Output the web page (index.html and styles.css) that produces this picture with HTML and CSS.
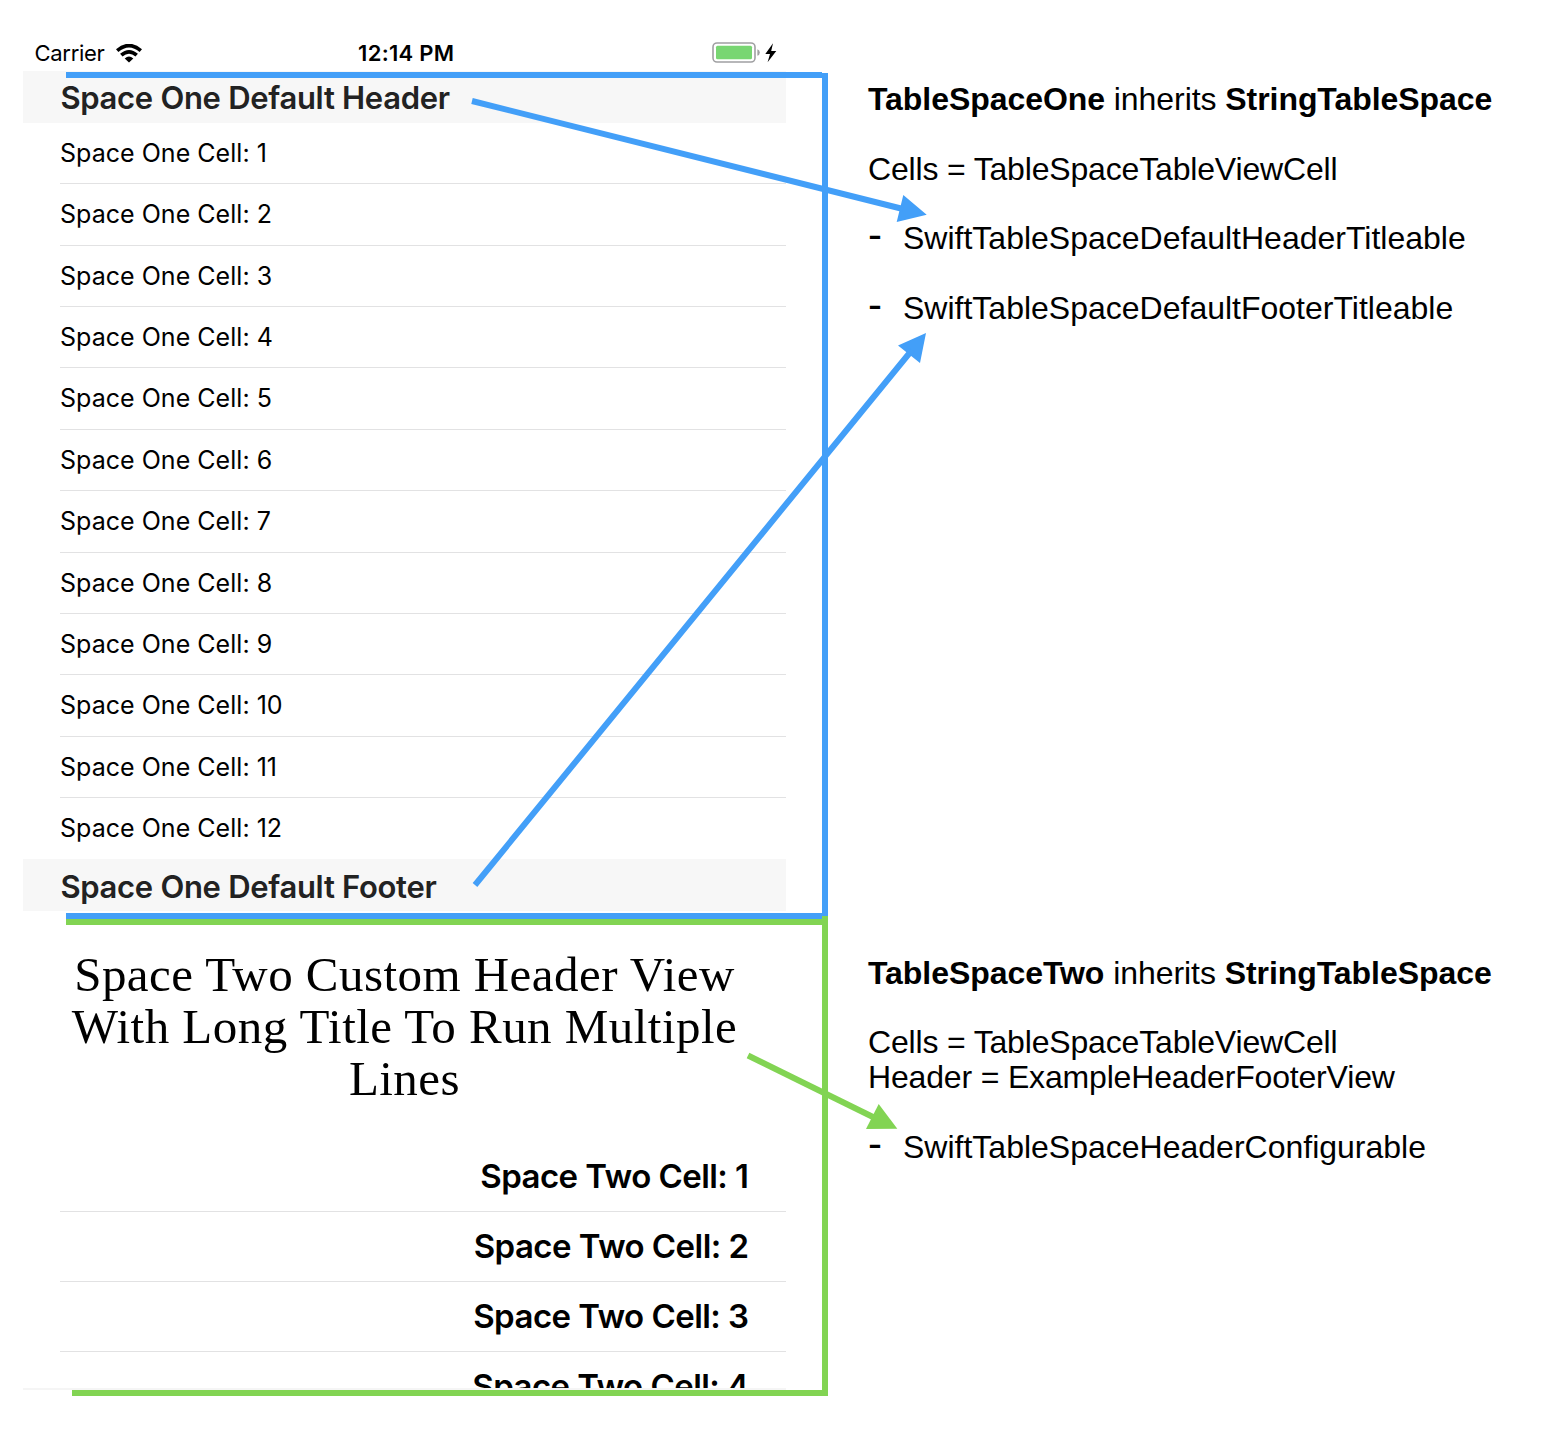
FILE: index.html
```html
<!DOCTYPE html>
<html lang="en">
<head>
<meta charset="utf-8">
<title>Swift Table Space</title>
<link rel="stylesheet" href="styles.css">
</head>
<body>
<main class="diagram">
  <section class="phone">
    <div class="status">
      <div class="carrier"><span>Carrier</span>
        <svg class="wifi" width="26" height="19" viewBox="0 0 26 19"><g fill="none" stroke="#000" stroke-width="3.7"><path d="M1.2 6.7Q13-3.5 24.8 6.7"/><path d="M5.3 11.1Q13 4.5 20.7 11.1"/></g><path d="M8.7 14.4Q13 10.8 17.3 14.4L13 18.6Z"/></svg>
      </div>
      <div class="time">12:14 PM</div>
      <div class="power">
        <svg width="66" height="22" viewBox="0 0 66 22"><rect x="1" y="1" width="42" height="19" rx="4" fill="#fff" stroke="#a0a0a2" stroke-width="1.6"/><rect x="4" y="3.7" width="36" height="13.6" rx="1.5" fill="#78d672"/><path d="M45.4 7.3Q47.8 8 47.8 10.5T45.4 13.7Z" fill="#a0a0a2"/><path d="M61 1.2L53.3 11.9H58L55.6 20.3L64.3 8.9H59.2Z"/></svg>
      </div>
    </div>
    <h2 class="band">Space One Default Header</h2>
    <ul class="list">
      <li>Space One Cell: 1</li>
      <li>Space One Cell: 2</li>
      <li>Space One Cell: 3</li>
      <li>Space One Cell: 4</li>
      <li>Space One Cell: 5</li>
      <li>Space One Cell: 6</li>
      <li>Space One Cell: 7</li>
      <li>Space One Cell: 8</li>
      <li>Space One Cell: 9</li>
      <li>Space One Cell: 10</li>
      <li>Space One Cell: 11</li>
      <li>Space One Cell: 12</li>
    </ul>
    <h2 class="band band-footer">Space One Default Footer</h2>
    <h1 class="custom">Space Two Custom Header View<br>With Long Title To Run Multiple<br>Lines</h1>
    <ul class="list list-two">
      <li>Space Two Cell: 1</li>
      <li>Space Two Cell: 2</li>
      <li>Space Two Cell: 3</li>
      <li>Space Two Cell: 4</li>
    </ul>
  </section>
  <aside class="notes">
    <section class="note note-one">
      <p class="title"><b>TableSpaceOne</b> inherits <b>StringTableSpace</b></p>
      <p class="gap assign">Cells = TableSpaceTableViewCell</p>
      <p class="gap item"><span class="dash">-</span><span>SwiftTableSpaceDefaultHeaderTitleable</span></p>
      <p class="gap item"><span class="dash">-</span><span>SwiftTableSpaceDefaultFooterTitleable</span></p>
    </section>
    <section class="note">
      <p class="title"><b>TableSpaceTwo</b> inherits <b>StringTableSpace</b></p>
      <p class="gap assign">Cells = TableSpaceTableViewCell</p>
      <p class="assign">Header = ExampleHeaderFooterView</p>
      <p class="gap item"><span class="dash">-</span><span>SwiftTableSpaceHeaderConfigurable</span></p>
    </section>
  </aside>
  <svg class="overlay" width="1552" height="1452" viewBox="0 0 1552 1452">
    <g fill="#439ff8">
      <path d="M66 72H822V78H66ZM822 73H828V916H822ZM66 913H822V919H66Z"/>
      <path d="M926.7 214.7L903.3 195L896.7 222ZM926 333L898 345.5L920 363Z"/>
    </g>
    <path d="M472 101L903 209M475 885L912 350" stroke="#439ff8" stroke-width="6" fill="none"/>
    <g fill="#82d453">
      <path d="M66 919H822V925H66ZM822 916H828V1396H822ZM72 1390H828V1396H72Z"/>
      <path d="M897.3 1128.7L878.7 1104L866 1129Z"/>
    </g>
    <path d="M748 1055.5L874 1117.5" stroke="#82d453" stroke-width="6"/>
  </svg>
</main>
</body>
</html>
```
FILE: styles.css
```css
* { box-sizing: border-box; margin: 0; padding: 0; }
body { background: #fff; color: #000; }
.diagram {
  position: relative;
  display: flex;
  gap: 82px;
  width: 1552px;
  height: 1452px;
  padding-left: 23px;
  overflow: hidden;
}
.overlay { position: absolute; inset: 0; }

.phone {
  width: 763px;
  height: 1390px;
  border-bottom: 2px solid #f5f5f5;
  overflow: hidden;
  font-family: Inter, "Liberation Sans", sans-serif;
}
.status {
  display: grid;
  grid-template-columns: 1fr auto 1fr;
  height: 71px;
  padding: 39px 8px 0 11.5px;
  line-height: 28px;
}
.carrier { display: flex; gap: 11px; font-size: 22px; letter-spacing: -0.3px; }
.wifi { margin-top: 4.5px; }
.time { font-size: 22px; font-weight: 600; letter-spacing: 0.3px; }
.power { display: flex; justify-content: flex-end; padding-top: 3px; }

.band {
  height: 51.8px;
  padding-left: 37.4px;
  background: #f7f7f7;
  color: #222;
  font-size: 31px;
  font-weight: 600;
  line-height: 54px;
  letter-spacing: -0.3px;
}
.band-footer { line-height: 55px; }
.list { list-style: none; padding-left: 37px; }
.list li {
  height: 61.4px;
  border-bottom: 1.5px solid #e2e2e3;
  font-size: 25px;
  line-height: 61px;
  letter-spacing: 0.03px;
}
.list li:last-child { border-bottom: 0; }

.custom {
  height: 231px;
  padding-top: 38px;
  font: 400 49px/52.1px "Liberation Serif", serif;
  letter-spacing: 0.46px;
  text-align: center;
  white-space: nowrap;
}
.list-two li {
  height: 70px;
  padding-right: 37.5px;
  border-bottom-width: 1px;
  font-size: 33px;
  font-weight: 600;
  line-height: 69px;
  letter-spacing: -0.55px;
  text-align: right;
}

.notes {
  padding-top: 82px;
  font: 32px/34.8px "Liberation Sans", Arial, sans-serif;
  white-space: nowrap;
}
.note-one { height: 873.6px; }
.title { letter-spacing: -0.06px; }
.assign { letter-spacing: -0.17px; }
.gap { margin-top: 34.8px; }
.item { display: flex; }
.dash { width: 35px; font-size: 42px; line-height: 28px; }
```
